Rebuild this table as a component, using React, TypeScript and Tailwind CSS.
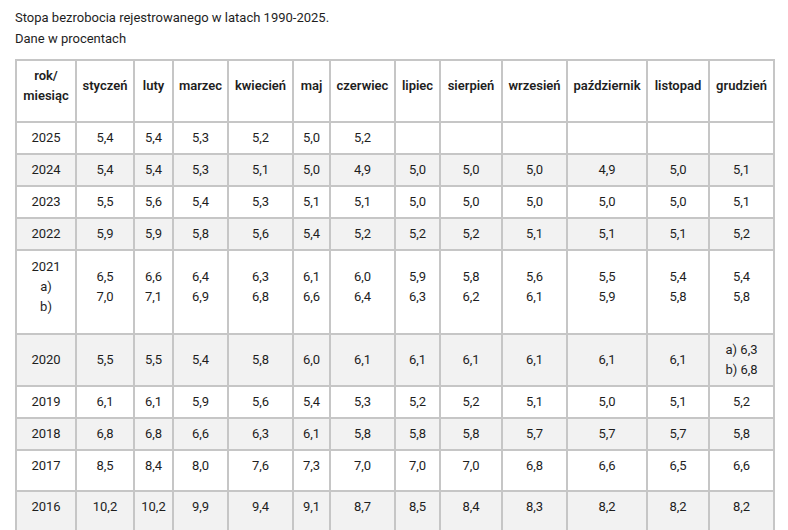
const months = [
  "styczeń",
  "luty",
  "marzec",
  "kwiecień",
  "maj",
  "czerwiec",
  "lipiec",
  "sierpień",
  "wrzesień",
  "październik",
  "listopad",
  "grudzień",
];

// szerokości kolumn zmierzone z linii siatki
const widths = [60, 58, 39, 55, 65, 37, 65, 45, 62, 65, 80, 62, 65];

type Row = {
  year: React.ReactNode;
  values: React.ReactNode[];
  pad?: string;
};

const rows: Row[] = [
  { year: "2025", values: ["5,4", "5,4", "5,3", "5,2", "5,0", "5,2", "", "", "", "", "", ""] },
  { year: "2024", values: ["5,4", "5,4", "5,3", "5,1", "5,0", "4,9", "5,0", "5,0", "5,0", "4,9", "5,0", "5,1"] },
  { year: "2023", values: ["5,5", "5,6", "5,4", "5,3", "5,1", "5,1", "5,0", "5,0", "5,0", "5,0", "5,0", "5,1"] },
  { year: "2022", values: ["5,9", "5,9", "5,8", "5,6", "5,4", "5,2", "5,2", "5,2", "5,1", "5,1", "5,1", "5,2"] },
  {
    year: (
      <>
        2021
        <br />
        a)
        <br />
        b)
      </>
    ),
    values: [
      ["6,5", "7,0"],
      ["6,6", "7,1"],
      ["6,4", "6,9"],
      ["6,3", "6,8"],
      ["6,1", "6,6"],
      ["6,0", "6,4"],
      ["5,9", "6,3"],
      ["5,8", "6,2"],
      ["5,6", "6,1"],
      ["5,5", "5,9"],
      ["5,4", "5,8"],
      ["5,4", "5,8"],
    ].map(([a, b]) => (
      <>
        {a}
        <br />
        {b}
      </>
    )),
    pad: "pt-[6px] pb-[16px]",
  },
  {
    year: "2020",
    values: [
      "5,5", "5,5", "5,4", "5,8", "6,0", "6,1", "6,1", "6,1", "6,1", "6,1", "6,1",
      <>
        a) 6,3
        <br />
        b) 6,8
      </>,
    ],
  },
  { year: "2019", values: ["6,1", "6,1", "5,9", "5,6", "5,4", "5,3", "5,2", "5,2", "5,1", "5,0", "5,1", "5,2"] },
  { year: "2018", values: ["6,8", "6,8", "6,6", "6,3", "6,1", "5,8", "5,8", "5,8", "5,7", "5,7", "5,7", "5,8"] },
  { year: "2017", values: ["8,5", "8,4", "8,0", "7,6", "7,3", "7,0", "7,0", "7,0", "6,8", "6,6", "6,5", "6,6"], pad: "pt-[5px] pb-[14px] align-top" },
  { year: "2016", values: ["10,2", "10,2", "9,9", "9,4", "9,1", "8,7", "8,5", "8,4", "8,3", "8,2", "8,2", "8,2"], pad: "pt-[5px] pb-[14px] align-top" },
];

export default function App() {
  return (
    <div className="min-h-[530px] bg-white pt-[7px] text-[13px] leading-[20px] text-[#1e1e1e] [font-family:Roboto,'Liberation_Sans',sans-serif]">
      <div className="pl-[15px] leading-[21px]">
        <p>Stopa bezrobocia rejestrowanego w latach 1990-2025.</p>
        <p>Dane w procentach</p>
      </div>

      <table className="mt-[10px] ml-[15px] w-[760px] table-fixed border-collapse text-center">
        <colgroup>
          {widths.map((w, i) => (
            <col key={i} style={{ width: w }} />
          ))}
        </colgroup>
        <thead>
          <tr className="bg-white font-semibold">
            <th className="border-2 border-[#c6c6c6] px-1 pt-[5px] pb-[15px] font-semibold">
              rok/
              <br />
              miesiąc
            </th>
            {months.map((m) => (
              <th
                key={m}
                className="border-2 border-[#c6c6c6] px-1 pt-[5px] pb-[15px] font-semibold"
              >
                {m}
              </th>
            ))}
          </tr>
        </thead>
        <tbody>
          {rows.map((row, r) => {
            const pad = row.pad ?? "py-[5px]";
            const bg = r % 2 === 1 ? "bg-[#f2f2f2]" : "bg-white";
            return (
              <tr key={r} className={bg}>
                <td className={`border-2 border-[#c6c6c6] px-1 ${pad}`}>
                  {row.year}
                </td>
                {row.values.map((v, i) => (
                  <td key={i} className={`border-2 border-[#c6c6c6] px-1 ${pad}`}>
                    {v}
                  </td>
                ))}
              </tr>
            );
          })}
        </tbody>
      </table>
    </div>
  );
}
